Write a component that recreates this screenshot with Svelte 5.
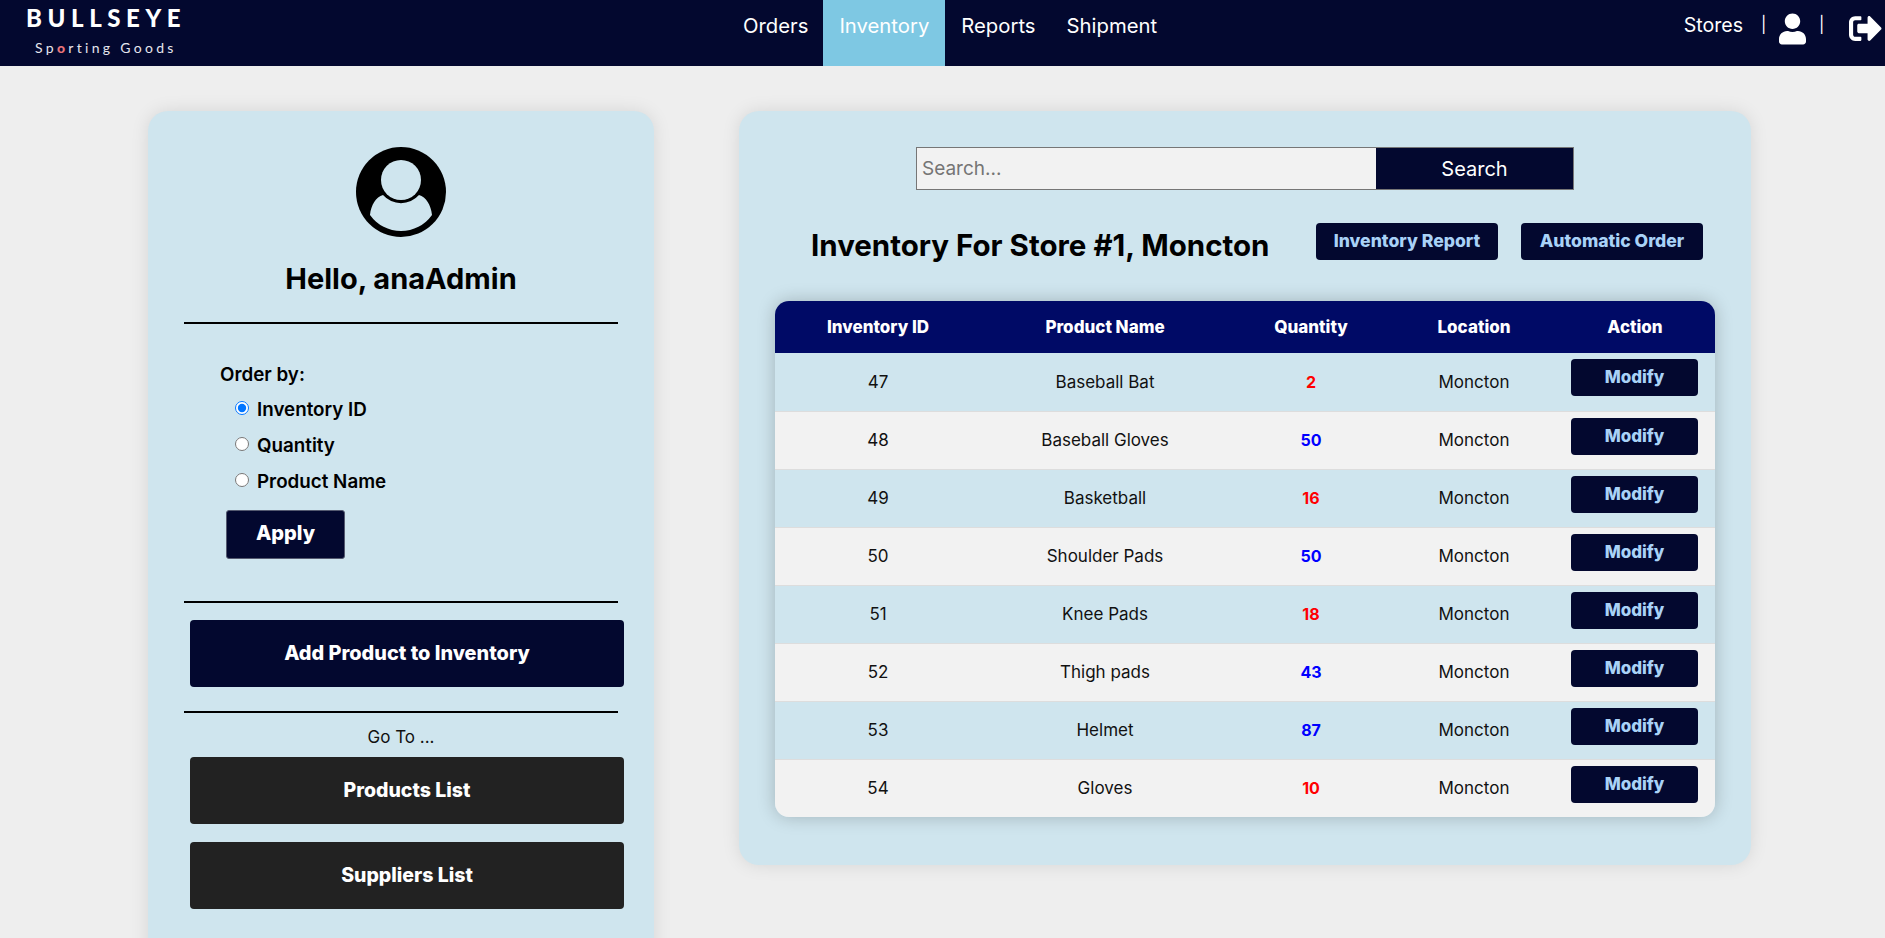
<script>
    let rows = [
        { id: 47, name: 'Baseball Bat', qty: 2 },
        { id: 48, name: 'Baseball Gloves', qty: 50 },
        { id: 49, name: 'Basketball', qty: 16 },
        { id: 50, name: 'Shoulder Pads', qty: 50 },
        { id: 51, name: 'Knee Pads', qty: 18 },
        { id: 52, name: 'Thigh pads', qty: 43 },
        { id: 53, name: 'Helmet', qty: 87 },
        { id: 54, name: 'Gloves', qty: 10 },
    ]
    let order_by = 'id'
</script>

<div class="page">
    <header class="nav">
        <div class="logo">
            <div class="logo-main">BULLSEYE</div>
            <div class="logo-sub">Sp<span class="dot">o</span>rting Goods</div>
        </div>
        <nav class="links">
            <a href="#orders">Orders</a>
            <a href="#inventory" class="active">Inventory</a>
            <a href="#reports">Reports</a>
            <a href="#shipment">Shipment</a>
        </nav>
        <div class="right">
            <span class="stores">Stores</span>
            <span class="bar first">|</span>
            <svg class="user" viewBox="0 0 448 512" fill="#fff">
                <path d="M224 256c70.7 0 128-57.3 128-128S294.7 0 224 0 96 57.3 96 128s57.3 128 128 128zm89.6 32h-16.7c-22.2 10.2-46.9 16-72.9 16s-50.6-5.8-72.9-16h-16.7C60.2 288 0 348.2 0 422.4V464c0 26.5 21.5 48 48 48h352c26.5 0 48-21.5 48-48v-41.6c0-74.2-60.2-134.4-134.4-134.4z" />
            </svg>
            <span class="bar second">|</span>
            <svg class="logout" viewBox="0 0 512 512" fill="#fff">
                <path d="M497 273L329 441c-15 15-41 4.5-41-17v-96H152c-13.3 0-24-10.7-24-24v-96c0-13.3 10.7-24 24-24h136V88c0-21.4 25.9-32 41-17l168 168c9.3 9.4 9.3 24.6 0 34zM192 436v-40c0-6.6-5.4-12-12-12H96c-17.7 0-32-14.3-32-32V160c0-17.7 14.3-32 32-32h84c6.6 0 12-5.4 12-12V76c0-6.6-5.4-12-12-12H96c-53 0-96 43-96 96v192c0 53 43 96 96 96h84c6.6 0 12-5.4 12-12z" />
            </svg>
        </div>
    </header>

    <main class="content">
        <aside class="card side">
            <svg class="avatar" viewBox="0 0 90 90">
                <circle cx="45" cy="45" r="45" fill="#000" />
                <circle cx="45" cy="33" r="20" fill="#cfe5ee" />
                <path d="M14 68C15 58 20 50 27 48A24 24 0 0 0 63 48C70 50 75 58 76 68A38 38 0 0 1 14 68Z" fill="#cfe5ee" />
            </svg>
            <h2 class="hello">Hello, anaAdmin</h2>
            <hr />
            <form class="order">
                <p class="order-title">Order by:</p>
                <label class="first-radio"><input type="radio" bind:group={order_by} value="id" />Inventory ID</label>
                <label><input type="radio" bind:group={order_by} value="qty" />Quantity</label>
                <label><input type="radio" bind:group={order_by} value="name" />Product Name</label>
                <button type="button" class="apply">Apply</button>
            </form>
            <hr class="hr-add" />
            <button class="wide navy">Add Product to Inventory</button>
            <hr class="hr-go" />
            <p class="goto">Go To ...</p>
            <button class="wide dark">Products List</button>
            <button class="wide dark second">Suppliers List</button>
        </aside>

        <section class="card list">
            <div class="search">
                <input type="text" placeholder="Search..." />
                <button>Search</button>
            </div>
            <div class="title-row">
                <h1>Inventory For Store #1, Moncton</h1>
                <button class="small first-small">Inventory Report</button>
                <button class="small">Automatic Order</button>
            </div>
            <div class="table-wrap">
                <table>
                    <colgroup>
                        <col style="width: 206px" />
                        <col style="width: 248px" />
                        <col style="width: 164px" />
                        <col style="width: 162px" />
                        <col style="width: 160px" />
                    </colgroup>
                    <thead>
                        <tr>
                            <th>Inventory ID</th>
                            <th>Product Name</th>
                            <th>Quantity</th>
                            <th>Location</th>
                            <th>Action</th>
                        </tr>
                    </thead>
                    <tbody>
                        {#each rows as row}
                            <tr>
                                <td>{row.id}</td>
                                <td>{row.name}</td>
                                <td class:low={row.qty < 20} class="qty">{row.qty}</td>
                                <td>Moncton</td>
                                <td class="action"><button class="modify">Modify</button></td>
                            </tr>
                        {/each}
                    </tbody>
                </table>
            </div>
        </section>
    </main>
</div>

<style>
    :global(body) {
        margin: 0;
        background: #eeeeee;
    }

    .page {
        height: 100vh;
        overflow: hidden;
        font-family: Inter, "Open Sans", sans-serif;
        color: #000;
    }

    /* nav */
    .nav {
        height: 66px;
        background: #03082f;
        display: flex;
        align-items: stretch;
        color: #fff;
    }

    .logo {
        width: 727px;
        box-sizing: border-box;
        padding: 3px 0 0 26px;
        font-family: Lato, sans-serif;
    }

    .logo-main {
        font-size: 24px;
        font-weight: 900;
        letter-spacing: 5.6px;
        line-height: 29px;
    }

    .logo-sub {
        font-size: 14px;
        font-weight: 400;
        letter-spacing: 3.3px;
        line-height: 17px;
        margin: 7px 0 0 9px;
        color: #e6e6ee;
    }

    .dot {
        color: #e8747a;
        font-weight: 900;
    }

    .links {
        display: flex;
    }

    .links a {
        color: #fff;
        text-decoration: none;
        font-size: 20.3px;
        padding: 13px 15px 0 16px;
    }

    .links a.active {
        background: #7ec8e3;
        padding-right: 16px;
    }

    .right {
        margin-left: auto;
        display: flex;
        align-items: flex-start;
    }

    .stores {
        margin-top: 13px;
        font-size: 19.6px;
    }

    .bar {
        width: 4px;
        margin-top: 13px;
        font-size: 16px;
        line-height: 22px;
        text-align: center;
    }

    .bar.first {
        margin-left: 18px;
    }

    .bar.second {
        margin-left: 13px;
    }

    .user {
        width: 27px;
        height: 32px;
        margin: 13px 0 0 14px;
    }

    .logout {
        width: 33px;
        height: 33px;
        margin: 12px 3px 0 26px;
    }

    /* cards */
    .content {
        display: flex;
        align-items: flex-start;
        gap: 85px;
        padding: 45px 134px 0 148px;
    }

    .card {
        background: #cfe5ee;
        border-radius: 20px;
        box-shadow: 0 0 18px rgba(0, 0, 0, 0.1);
        box-sizing: border-box;
    }

    .side {
        width: 506px;
        height: 880px;
        flex-shrink: 0;
        padding: 36px 36px 0;
        display: flex;
        flex-direction: column;
    }

    .avatar {
        width: 90px;
        height: 90px;
        align-self: center;
        display: block;
    }

    .hello {
        margin: 23px 0 0;
        text-align: center;
        font-size: 29px;
        line-height: 38px;
        font-weight: 700;
    }

    hr {
        width: 100%;
        height: 2px;
        margin: 24px 0 0;
        border: 0;
        background: #000;
    }

    .order {
        padding: 0 0 0 36px;
        display: flex;
        flex-direction: column;
        align-items: flex-start;
    }

    .order-title {
        margin: 37px 0 0;
        font-size: 18.8px;
        line-height: 27px;
        font-weight: 600;
    }

    .order label {
        display: flex;
        align-items: center;
        height: 36px;
        margin-left: 15px;
        font-size: 18.8px;
        font-weight: 600;
    }

    .order label.first-radio {
        margin-top: 3px;
    }

    .order input {
        margin: 0 8px 3px 0;
        width: 14px;
        height: 14px;
    }

    .apply {
        margin: 11px 0 0 6px;
        width: 119px;
        height: 49px;
        padding: 0 0 3px;
        background: #03082f;
        color: #fff;
        border: 1px solid #555a70;
        border-radius: 3px;
        font-family: inherit;
        font-size: 20px;
        font-weight: 800;
    }

    .hr-add {
        margin-top: 42px;
    }

    .wide {
        display: block;
        width: 434px;
        height: 67px;
        margin: 17px 0 0 6px;
        padding: 0 0 1px;
        border: 0;
        border-radius: 4px;
        color: #fff;
        font-family: inherit;
        font-size: 19.5px;
        font-weight: 800;
    }

    .navy {
        background: #03082f;
        font-size: 19.9px;
    }

    .dark {
        background: #222;
    }

    .dark.second {
        margin-top: 18px;
    }

    .hr-go {
        margin-top: 24px;
    }

    .goto {
        margin: 11px 0 6px;
        text-align: center;
        font-size: 17px;
        line-height: 27px;
        color: #111;
    }

    .goto + .wide {
        margin-top: 0;
    }

    .list {
        width: 1012px;
        height: 754px;
        flex-shrink: 0;
        padding: 36px 36px 0;
    }

    .search {
        display: flex;
        width: 658px;
        height: 43px;
        margin: 0 auto;
    }

    .search input {
        width: 460px;
        box-sizing: border-box;
        border: 1px solid #767676;
        border-right: 0;
        background: #f2f2f2;
        padding: 0 5px;
        font-family: inherit;
        font-size: 19px;
    }

    .search input::placeholder {
        color: #757575;
    }

    .search button {
        flex: 1;
        background: #03082f;
        color: #fff;
        border: 1px solid #767676;
        border-left: 0;
        font-family: inherit;
        font-size: 20px;
    }

    .title-row {
        display: flex;
        align-items: center;
        height: 37px;
        margin-top: 33px;
    }

    h1 {
        margin: 6px 0 0 36px;
        width: 505px;
        font-size: 29.5px;
        font-weight: 700;
        white-space: nowrap;
    }

    .small {
        width: 182px;
        height: 37px;
        padding: 0 0 2px;
        background: #03082f;
        color: #a9d2f7;
        border: 0;
        border-radius: 4px;
        font-family: inherit;
        font-size: 17.6px;
        font-weight: 800;
    }

    .first-small {
        margin-right: 23px;
    }

    .table-wrap {
        margin-top: 41px;
        width: 940px;
        border-radius: 14px;
        overflow: hidden;
        box-shadow: 0 0 18px rgba(0, 0, 0, 0.22);
    }

    table {
        width: 940px;
        table-layout: fixed;
        border-collapse: collapse;
        font-size: 17px;
    }

    thead tr {
        background: #000a66;
        color: #fff;
        height: 52px;
    }

    th {
        padding: 0;
        font-weight: 800;
    }

    tbody tr {
        height: 58px;
        background: #cfe5ee;
        border-top: 1px solid #dddddd;
    }

    tbody tr:first-child {
        border-top: 0;
    }

    tbody tr:nth-child(even) {
        background: #f2f2f2;
    }

    td {
        padding: 0;
        text-align: center;
        color: #111;
    }

    td.qty {
        color: #0000ff;
        font-weight: 700;
        font-size: 16px;
    }

    td.qty.low {
        color: #ff0000;
    }

    .action {
        vertical-align: top;
    }

    .modify {
        display: block;
        width: 127px;
        height: 37px;
        margin: 6px 17px 0 -5px;
        padding: 0 0 1px;
        float: right;
        background: #03082f;
        color: #a9d2f7;
        border: 0;
        border-radius: 4px;
        font-family: inherit;
        font-size: 17px;
        font-weight: 800;
    }
</style>
